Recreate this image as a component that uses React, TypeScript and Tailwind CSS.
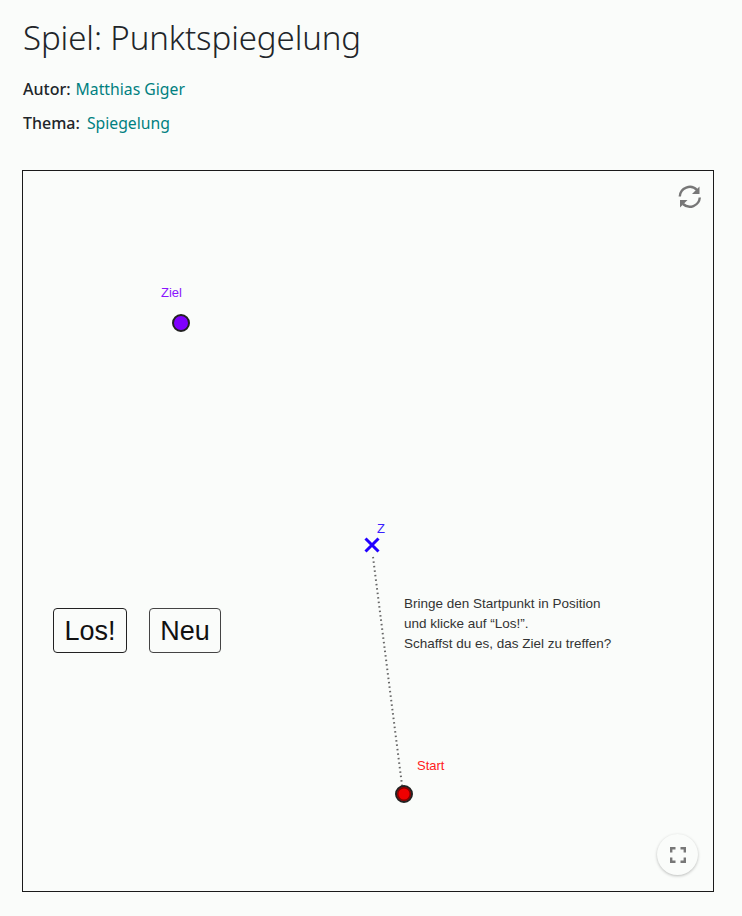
import React from "react";

const App = () => {
  return (
    <div className="min-h-[916px] bg-[#fafcfa] px-[22px] pt-[15px] text-[#212529] font-['Noto_Sans','Open_Sans',sans-serif] overflow-hidden">
      <h1 className="text-[33px] leading-[46px] font-light pl-px tracking-[-0.1px]">Spiel: Punktspiegelung</h1>
      <div className="mt-[16px] flex flex-col gap-[10px] pl-px text-[16px] leading-[24px]">
        <p className="flex items-baseline gap-[5px]">
          <span className="font-medium">Autor:</span>
          <a className="text-[#008080] text-[15.75px]" href="#">Matthias Giger</a>
        </p>
        <p className="flex items-baseline gap-[7px]">
          <span className="font-medium">Thema:</span>
          <a className="text-[#008080] text-[15.75px]" href="#">Spiegelung</a>
        </p>
      </div>

      {/* applet */}
      <div className="relative mt-[35px] w-[692px] h-[722px] border border-[#1a1a1a] font-['Liberation_Sans',sans-serif]">
        <svg className="absolute left-[655px] top-[14px] w-[24px] h-[24px]" viewBox="0 0 24 24" fill="none" stroke="#777" strokeWidth="2.4">
          <path d="M1.8 11.5A10 10 0 0 1 19 5" />
          <path d="M21.8 12.5A10 10 0 0 1 5 19" />
          <path d="M21.5 1.5V9H14Z" fill="#777" stroke="none" />
          <path d="M2 22.5V15H9.5Z" fill="#777" stroke="none" />
        </svg>

        <span className="absolute left-[138px] top-[115px] text-[13px] leading-[14px] text-[#8a14ff]">Ziel</span>
        <div className="absolute left-[149px] top-[143px] w-[18px] h-[18px] rounded-full bg-[#7f00ff] border-2 border-[#222]" />

        <span className="absolute left-[354px] top-[351px] text-[13px] leading-[14px] text-[#3a20ff]">Z</span>
        <svg className="absolute left-[341px] top-[366px] w-[64px] h-[270px] overflow-visible" viewBox="0 0 64 270" fill="none">
          <path d="M1.5 1.5L14.5 14.5M14.5 1.5L1.5 14.5" stroke="#2200ff" strokeWidth="3" />
          <path d="M9 20L39 256" stroke="#666" strokeWidth="2" strokeDasharray="1.5 3" />
        </svg>

        <div className="absolute left-[381px] top-[423px] text-[13.5px] leading-[20px] text-[#333]">
          <p>Bringe den Startpunkt in Position</p>
          <p>und klicke auf “Los!”.</p>
          <p>Schaffst du es, das Ziel zu treffen?</p>
        </div>

        <div className="absolute left-[30px] top-[437px] flex gap-[22px]">
          <button className="w-[74px] h-[45px] pt-[2px] rounded-[4px] border border-[#222] text-[27px] text-[#111]">Los!</button>
          <button className="w-[72px] h-[45px] pt-[2px] rounded-[4px] border border-[#444] text-[27px] text-[#111]">Neu</button>
        </div>

        <span className="absolute left-[394px] top-[588px] text-[13px] leading-[14px] text-[#ff2020]">Start</span>
        <div className="absolute left-[372px] top-[614px] w-[18px] h-[18px] rounded-full bg-[#f00000] border-2 border-[#222] shadow-[inset_0_0_0_1.5px_#800]" />

        <div className="absolute left-[634px] top-[663px] w-[41px] h-[41px] rounded-full bg-[#fafcfa] shadow-[0_1px_3px_rgba(0,0,0,0.25)] flex items-center justify-center">
          <svg className="w-[16px] h-[16px]" viewBox="0 0 16 16" fill="none" stroke="#777" strokeWidth="2.4">
            <path d="M1.2 5.5V1.2H5.5M10.5 1.2H14.8V5.5M14.8 10.5V14.8H10.5M5.5 14.8H1.2V10.5" />
          </svg>
        </div>
      </div>
    </div>
  );
};

export default App;
